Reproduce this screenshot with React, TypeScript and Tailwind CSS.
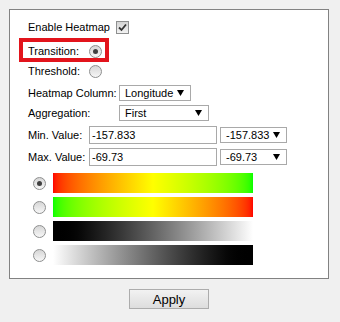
const Radio = ({ checked }: { checked?: boolean }) => (
  <div className="w-[13px] h-[13px] rounded-full border border-[#8e8f8f] bg-linear-to-b from-[#d6d6d6] to-[#f7f7f7] flex items-center justify-center shrink-0">
    {checked && <div className="w-[5px] h-[5px] rounded-full bg-[#404040]" />}
  </div>
)

const Arrow = () => (
  <svg width="7" height="6" viewBox="0 0 7 6" className="shrink-0">
    <polygon points="0,0 7,0 3.5,6" fill="#000" />
  </svg>
)

const Select = ({ value, className }: { value: string; className: string }) => (
  <div className={`h-[16px] border border-[#a9a9a9] bg-white flex items-center justify-between pl-[5px] pr-[6px] ${className}`}>
    <span>{value}</span>
    <Arrow />
  </div>
)

const Input = ({ value }: { value: string }) => (
  <div className="w-[128px] h-[18px] border border-[#a9a9a9] bg-white flex items-center px-[2px]">
    {value}
  </div>
)

const bars = [
  'bg-linear-to-r from-[#ff0000] via-[#ffff00] to-[#00ff00]',
  'bg-linear-to-r from-[#00ff00] via-[#ffff00] to-[#ff0000]',
  'bg-linear-to-r from-[#000000] to-[#ffffff]',
  'bg-linear-to-r from-[#ffffff] to-[#000000]',
]

export default function App() {
  return (
    <div className="w-[340px] h-[322px] bg-[#f0f0f0] pt-[9px] font-['Liberation_Sans',Arial,sans-serif] text-[11px] text-black">
      {/* Panel */}
      <div className="ml-[9px] w-[320px] h-[270px] border border-[#828282] bg-white pt-[8px] pb-[13px]">
        {/* Enable Heatmap */}
        <div className="flex items-center h-[18px] pl-[18px]">
          <span className="w-[88px]">Enable Heatmap</span>
          <div className="w-[13px] h-[13px] border border-[#8e8f8f] bg-linear-to-b from-[#d4d4d4] to-[#f2f2f2] flex items-center justify-center">
            <svg width="9" height="9" viewBox="0 0 9 9">
              <path d="M1 4.5 L3.5 7 L8 1.5" stroke="#333" strokeWidth="1.8" fill="none" />
            </svg>
          </div>
        </div>

        {/* Transition (highlighted) */}
        <div className="relative flex items-center h-[18px] pl-[18px] mt-[6px]">
          <span className="w-[61px]">Transition:</span>
          <Radio checked />
          <div className="absolute left-[9px] top-[-4px] w-[90px] h-[24px] border-4 border-[#e2141c]" />
        </div>

        <div className="flex items-center h-[18px] pl-[18px] mt-[2px]">
          <span className="w-[61px]">Threshold:</span>
          <Radio />
        </div>

        <div className="flex items-center h-[18px] pl-[18px] mt-[4px]">
          <span className="w-[91px]">Heatmap Column:</span>
          <Select value="Longitude" className="w-[72px]" />
        </div>

        <div className="flex items-center h-[18px] pl-[18px] mt-[2px]">
          <span className="w-[91px]">Aggregation:</span>
          <Select value="First" className="w-[90px]" />
        </div>

        <div className="flex items-center h-[18px] pl-[18px] mt-[4px]">
          <span className="w-[61px]">Min. Value:</span>
          <Input value="-157.833" />
          <Select value="-157.833" className="w-[67px] ml-[3px] pl-[4px]" />
        </div>

        <div className="flex items-center h-[18px] pl-[18px] mt-[4px]">
          <span className="w-[61px]">Max. Value:</span>
          <Input value="-69.73" />
          <Select value="-69.73" className="w-[67px] ml-[3px] pl-[4px]" />
        </div>

        {/* Colour scales */}
        <div className="flex flex-col gap-[4px] mt-[7px] pl-[23px]">
          {bars.map((b, i) => (
            <div key={i} className="flex items-center gap-[7px]">
              <Radio checked={i === 0} />
              <div className={`w-[200px] h-[20px] ${b}`} />
            </div>
          ))}
        </div>
      </div>

      <div className="flex justify-center mt-[10px] pl-[18px] pr-[20px]">
        <button className="w-[80px] h-[20px] border border-[#acacac] bg-linear-to-b from-[#f2f2f2] to-[#dddddd] text-[13px] leading-none">
          Apply
        </button>
      </div>
    </div>
  )
}
